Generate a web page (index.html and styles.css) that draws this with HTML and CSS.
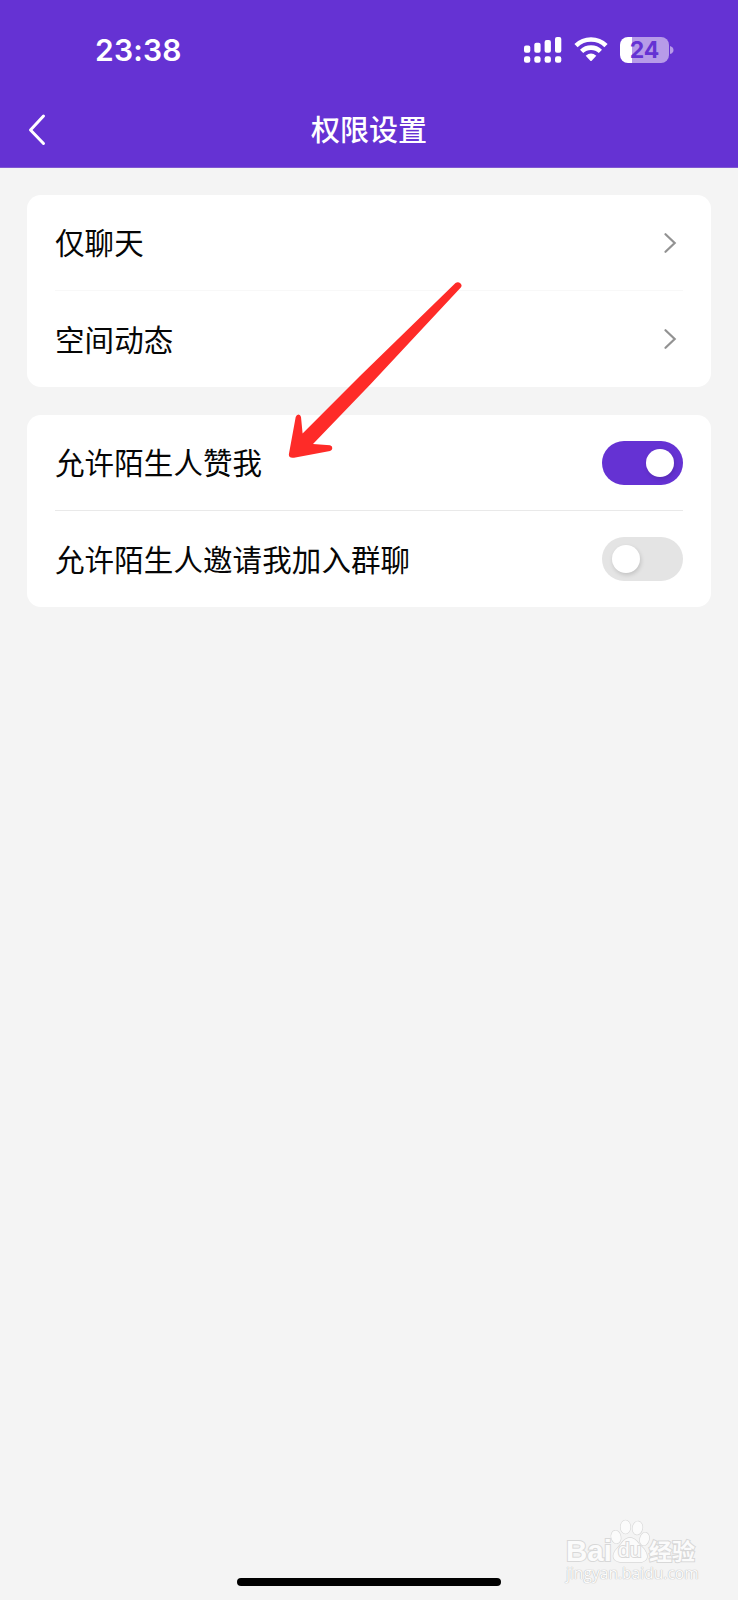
FILE: index.html
```html
<!DOCTYPE html>
<html lang="zh-CN">
<head>
<meta charset="utf-8">
<title>权限设置</title>
<link rel="stylesheet" href="styles.css">
</head>
<body>
<div class="screen">
  <header class="header">
    <div class="status">
      <span class="time">23:38</span>
      <div class="indicators">
        <svg class="signal" width="38" height="27" viewBox="0 0 38 27" fill="#fff">
          <rect x="0" y="8.4" width="6.3" height="7.4" rx="2"/><rect x="10.3" y="5.8" width="6.3" height="10" rx="2"/><rect x="20.6" y="3" width="6.3" height="12.8" rx="2"/><rect x="31" y="0" width="6.3" height="15.8" rx="2"/>
          <rect x="0" y="19.2" width="6.3" height="6.6" rx="2.2"/><rect x="10.3" y="19.2" width="6.3" height="6.6" rx="2.2"/><rect x="20.6" y="19.2" width="6.3" height="6.6" rx="2.2"/><rect x="31" y="19.2" width="6.3" height="6.6" rx="2.2"/>
        </svg>
        <svg class="wifi" width="34" height="25" viewBox="0 0 34 25">
          <path d="M2 8.6A21.5 21.5 0 0 1 32 8.6M7.6 14.4A13.6 13.6 0 0 1 26.4 14.4" fill="none" stroke="#fff" stroke-width="4.6"/>
          <path d="M11.7 18.7Q17 14.5 22.3 18.7L17.7 23.7Q17 24.4 16.3 23.7Z" fill="#fff"/>
        </svg>
        <div class="battery"><span class="level">24</span></div>
        <svg class="cap" width="4" height="8" viewBox="0 0 4 8"><path d="M0 0Q3.5 1 3.5 4T0 8Z" fill="#b79be8"/></svg>
      </div>
    </div>
    <div class="nav">
      <svg class="back" width="20" height="34" viewBox="0 0 20 34"><path d="M16.5 3L3.5 17L16.5 30.5" fill="none" stroke="#fff" stroke-width="3" stroke-linecap="round" stroke-linejoin="round"/></svg>
      <h1 class="title">权限设置</h1>
    </div>
  </header>
  <main class="content">
    <section class="card">
      <div class="row line faint"><span class="label">仅聊天</span><svg class="chevron" width="13" height="20" viewBox="0 0 13 20"><path d="M1.5 1.2L10.7 10L1.5 18.8"/></svg></div>
      <div class="row"><span class="label">空间动态</span><svg class="chevron" width="13" height="20" viewBox="0 0 13 20"><path d="M1.5 1.2L10.7 10L1.5 18.8"/></svg></div>
    </section>
    <section class="card">
      <div class="row line"><span class="label">允许陌生人赞我</span><div class="toggle on"><i class="knob"></i></div></div>
      <div class="row"><span class="label">允许陌生人邀请我加入群聊</span><div class="toggle"><i class="knob"></i></div></div>
    </section>
  </main>
  <svg class="arrow" width="176" height="182" viewBox="286 279 176 182"><path d="M289 453.500L295.700 417Q296.500 414.500 298.500 414.500T301 417L302.600 433.500L360 376L455.500 283Q458 281.200 460.300 283.200T460.800 287.500L370.500 384.300L313 444L330 445.300Q332.500 446 332.300 448.200T330 451L294 457.700Q288 458.500 289 453.500Z" fill="#fe2b28"/></svg>
  <div class="watermark">
    <div class="brand">
      <span class="bai">Bai</span>
      <span class="paw">
        <svg class="paw-shape" width="40" height="46" viewBox="610 1518 40 46">
          <ellipse cx="616" cy="1537" rx="4.700" ry="6.500" transform="rotate(-12 616 1537)"/>
          <ellipse cx="625.500" cy="1527" rx="4.900" ry="6.700"/>
          <ellipse cx="637.500" cy="1528" rx="4.900" ry="6.700" transform="rotate(10 637.500 1528)"/>
          <ellipse cx="644.500" cy="1539" rx="4.500" ry="6.500" transform="rotate(14 644.500 1539)"/>
          <path d="M621 1544Q630 1531.500 639 1544L644 1549Q651 1559 642 1562H620Q610 1560 615 1551Z"/>
        </svg>
        <span class="du">du</span>
      </span>
      <span class="han">经验</span>
    </div>
    <div class="site">jingyan.baidu.com</div>
  </div>
  <div class="home"></div>
</div>
</body>
</html>
```
FILE: styles.css
```css
* { box-sizing: border-box; }
body { margin: 0; background: #f4f4f4; font-family: "Noto Sans CJK SC", sans-serif; }
.screen { position: relative; display: flex; flex-direction: column; height: 1600px; background: #f4f4f4; overflow: hidden; }
.header { height: 168px; background: #6532d3; color: #fff; border-bottom: 1px solid #8057d2; }
.status { height: 92px; display: flex; justify-content: space-between; padding: 0 64px 0 95px; }
.time { font: 600 30px/36px Inter, sans-serif; margin-top: 32px; letter-spacing: .2px; }
.indicators { display: flex; align-items: flex-start; padding-top: 37px; }
.wifi { margin-left: 12px; }
.battery { width: 49px; height: 26px; margin-left: 12px; border-radius: 8px; background: linear-gradient(90deg, #fff 12px, #b79be8 12px); text-align: center; }
.level { font: 700 23px/26px Inter, sans-serif; color: #6532d3; }
.cap { margin: 9px 0 0 1px; }
.nav { display: grid; grid-template-columns: 80px 1fr 80px; align-items: center; height: 76px; }
.back { margin-left: 27px; }
.title { margin: 0; padding-bottom: 4px; text-align: center; font-size: 29px; line-height: 40px; font-weight: 500; }
.content { display: flex; flex-direction: column; gap: 28px; padding: 27px; }
.card { height: 192px; padding: 0 28px; border-radius: 14px; background: #fff; }
.row { height: 96px; display: flex; align-items: center; justify-content: space-between; }
.label { padding-bottom: 3px; font-size: 29.5px; line-height: 44px; letter-spacing: .1px; color: #060606; }
.line { border-bottom: 1px solid #e9e9e9; }
.faint { border-color: #f8f8f8; }
.chevron { margin-right: 6px; fill: none; stroke: #929292; stroke-width: 2.2; stroke-linecap: round; }
.toggle { width: 81px; height: 44px; border-radius: 22px; background: #e4e4e4; display: flex; align-items: center; padding: 0 9px 0 10px; }
.toggle.on { background: #6532d3; justify-content: flex-end; }
.knob { width: 28px; height: 28px; border-radius: 50%; background: #fff; box-shadow: 1px 2px 4px rgba(0, 0, 0, .15); }
.arrow { position: absolute; left: 286px; top: 279px; }
.watermark { position: absolute; left: 566px; top: 1518px; width: 136px; color: #fbfbfb; -webkit-text-stroke: 2px #d8d8d8; paint-order: stroke fill; }
.brand { display: flex; height: 46px; align-items: flex-end; }
.bai { width: 44px; font: 700 29.5px/24px "Liberation Sans", sans-serif; margin-bottom: 1px; }
.paw { position: relative; width: 39px; height: 46px; }
.paw-shape { display: block; fill: #fbfbfb; stroke: #d8d8d8; stroke-width: 1.3; }
.du { position: absolute; left: 8px; top: 20px; font: 400 21px/23px "Liberation Sans", sans-serif; letter-spacing: 0; }
.han { font-size: 23px; line-height: 24px; margin-bottom: 2px; font-weight: 700; }
.site { width: 134px; margin-top: -1px; font: 15.6px/20px "Open Sans", sans-serif; color: #fcfcfc; -webkit-text-stroke: 0; text-shadow: 0 0 1px #bbb, 0 0 1px #bbb; }
.home { position: absolute; left: 237px; top: 1578px; width: 264px; height: 8px; border-radius: 4px; background: #000; }
```
